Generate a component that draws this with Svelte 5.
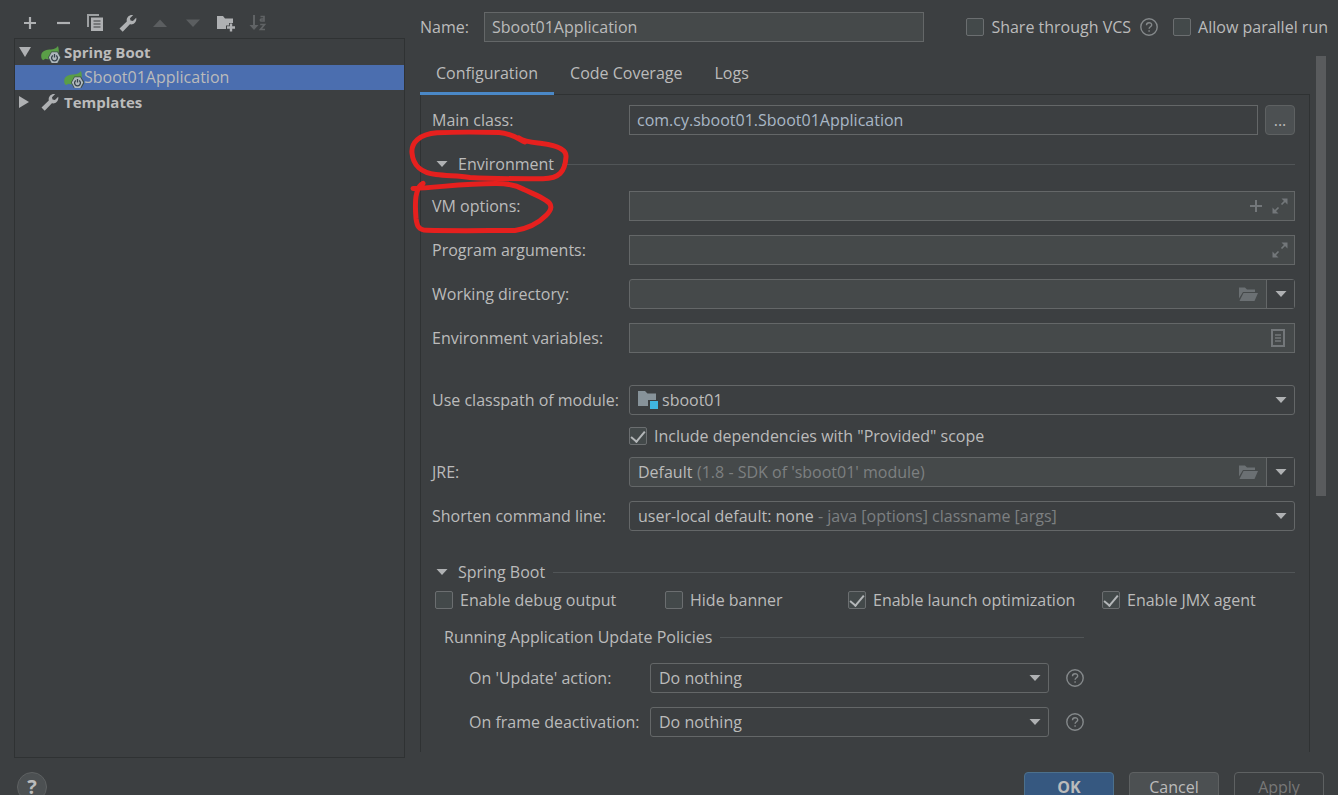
<script lang="ts">
  let name = 'Sboot01Application';
  let mainClass = 'com.cy.sboot01.Sboot01Application';
  let vmOptions = '';
  let programArguments = '';
  let workingDirectory = '';
  let environmentVariables = '';
  let shareThroughVcs = false;
  let allowParallelRun = false;
  let includeProvided = true;
  let activeTab = 'Configuration';

  const tabs = ['Configuration', 'Code Coverage', 'Logs'];

  let springOptions = [
    { id: 'debug-output', label: 'Enable debug output', checked: false },
    { id: 'hide-banner', label: 'Hide banner', checked: false },
    { id: 'launch-optimization', label: 'Enable launch optimization', checked: true },
    { id: 'jmx-agent', label: 'Enable JMX agent', checked: true },
  ];

  const policies = [
    { id: 'update-action', label: "On 'Update' action:" },
    { id: 'frame-deactivation', label: 'On frame deactivation:' },
  ];
</script>

{#snippet arrow()}
  <svg class="arrow" width="12" height="8" viewBox="0 0 12 8" aria-hidden="true"><path d="M.5 1h11L6 7z" fill="currentColor" /></svg>
{/snippet}

{#snippet help()}
  <svg width="18" height="18" viewBox="0 0 18 18" fill="none" stroke="#85898b" stroke-width="1.400" aria-hidden="true">
    <circle cx="9" cy="9" r="8.200" />
    <path d="M6.500 7.300c0-3.400 5.200-3.300 5.200-.3 0 1.800-2.600 1.800-2.600 3.700M9.100 12.200v1.600" />
  </svg>
{/snippet}

{#snippet wrench()}
  <svg width="18" height="18" viewBox="0 0 18 18" aria-hidden="true">
    <path d="M.5 14.600 7.800 7.400C7 3.800 10 .2 14.200 1L11 4.200l.5 2.300 2.400.5L17.200 3.800c.9 4-2.400 7.400-6.300 6.500L3.700 17.700z" fill="#afb1b3" />
  </svg>
{/snippet}

{#snippet leaf()}
  <svg width="20" height="22" viewBox="0 -5 20 22" aria-hidden="true">
    <path d="M17 0c1.300 4.400 1.300 9-2.200 11.500-3 2.300-7.500 2-10.500 1.200L2 14.300.6 12.500C-1 7.500 2.200 4.200 6.800 3.700 11.500 3.400 14.500 3.200 17 0z" fill="#5a9e47" />
    <path d="M10.300 5.500h6.500l3.200 5v2L16.800 18h-6.500L7 11.500z" fill="#3c4c4a" />
    <path d="m10.700 6.200h5.600l2.900 5.300-2.900 5.400h-5.600l-2.900-5.400z" fill="#afb8bd" />
    <path d="M11.900 9.500a2.900 2.900 0 1 0 3.200 0M13.500 8v3.500" fill="none" stroke="#36424c" stroke-width="1.300" />
  </svg>
{/snippet}

{#snippet folder()}
  <svg width="20" height="16" viewBox="0 0 20 16" aria-hidden="true">
    <path d="M1 1.500h6l2 2h8V6H5L1 12.500z" fill="#6b7073" />
    <path d="M5.500 7H20l-3.500 8H1.500z" fill="#6b7073" />
  </svg>
{/snippet}

{#snippet expand()}
  <svg width="16" height="16" viewBox="0 0 16 16" fill="none" stroke="#73777a" stroke-width="1.700" aria-hidden="true">
    <path d="M9.500 6.500 14 2M6.500 9.500 2 14" />
    <path d="M9.500.5h6v6zM.5 9.500v6h6z" fill="#73777a" stroke="none" />
  </svg>
{/snippet}

<div class="dialog">
  <div class="main">
    <aside class="sidebar">
      <div class="toolbar">
        <button aria-label="Add">
          <svg width="18" height="18" viewBox="0 0 18 18"><path d="M9 3v12M3 9h12" stroke="#afb1b3" stroke-width="2.200" /></svg>
        </button>
        <button aria-label="Remove">
          <svg width="18" height="18" viewBox="0 0 18 18"><path d="M3 9h13" stroke="#afb1b3" stroke-width="2.200" /></svg>
        </button>
        <button aria-label="Copy">
          <svg width="18" height="18" viewBox="0 0 18 18">
            <path d="M1 0h12v2H3v11H1z" fill="#9da0a2" />
            <path d="M5 3.500h12V17H5z" fill="#afb1b3" />
            <path d="M7.500 7h7M7.500 10h7M7.500 13h7" stroke="#3c3f41" stroke-width="1.200" />
          </svg>
        </button>
        <button aria-label="Edit templates">{@render wrench()}</button>
        <button aria-label="Move up" disabled>
          <svg width="18" height="18" viewBox="0 0 18 18"><path d="M2 13 9 5.500 16 13z" fill="#5b5e60" /></svg>
        </button>
        <button aria-label="Move down" disabled>
          <svg width="18" height="18" viewBox="0 0 18 18"><path d="M2 5.500h14L9 13z" fill="#5b5e60" /></svg>
        </button>
        <button aria-label="New folder">
          <svg width="20" height="18" viewBox="0 0 20 18">
            <path d="M1 2h6l2 2.500h8V9h-4v2.500h-3V15H1z" fill="#afb1b3" />
            <path d="M15 9.500v8M11 13.500h8" stroke="#afb1b3" stroke-width="2.400" />
          </svg>
        </button>
        <button aria-label="Sort alphabetically" disabled>
          <svg width="18" height="18" viewBox="0 0 18 18" fill="none" stroke="#606365" stroke-width="1.700">
            <path d="M5 1v13" stroke-width="2" />
            <path d="M.5 11h9L5 16z" fill="#606365" stroke="none" />
            <path d="M11.500 2.500H15V7h-2.500c-1.500 0-1.500-2 0-2H15M11.200 10.500h4.300l-4 5h4.500" />
          </svg>
        </button>
      </div>

      <ul class="tree">
        <li class="group">
          <svg class="toggle" width="12" height="12" viewBox="0 0 12 12" aria-hidden="true"><path d="M0 1h12L6 11z" fill="#afb1b3" /></svg>
          <span class="tree-icon">{@render leaf()}</span>
          Spring Boot
        </li>
        <li class="child selected">
          <span class="tree-icon">{@render leaf()}</span>
          Sboot01Application
        </li>
        <li class="group">
          <svg class="toggle" width="12" height="12" viewBox="0 0 12 12" aria-hidden="true"><path d="M0 0v12l10-6z" fill="#afb1b3" /></svg>
          <span class="tree-icon">{@render wrench()}</span>
          Templates
        </li>
      </ul>
    </aside>

    <section class="content">
      <div class="name-row">
        <label for="name">Name:</label>
        <input class="field name-field" id="name" type="text" bind:value={name} />
        <div class="check share">
          <input id="share-vcs" type="checkbox" bind:checked={shareThroughVcs} />
          <label for="share-vcs">Share through VCS</label>
          <button class="help" aria-label="About sharing">{@render help()}</button>
        </div>
        <div class="check">
          <input id="parallel-run" type="checkbox" bind:checked={allowParallelRun} />
          <label for="parallel-run">Allow parallel run</label>
        </div>
      </div>

      <div class="scroll-area">
        <div class="settings">
          <div class="tabs" role="tablist">
            {#each tabs as tab}
              <button role="tab" class:active={activeTab === tab} aria-selected={activeTab === tab} on:click={() => (activeTab = tab)}>{tab}</button>
            {/each}
          </div>

          <div class="panel">
            <div class="row">
              <label for="main-class">Main class:</label>
              <input class="field main-class" id="main-class" type="text" bind:value={mainClass} />
              <button class="browse" aria-label="Browse classes">...</button>
            </div>

            <h2 class="separator environment">{@render arrow()}<span>Environment</span></h2>

            <div class="rows">
              <div class="row">
                <label for="vm-options">VM options:</label>
                <div class="field box">
                  <input id="vm-options" type="text" bind:value={vmOptions} />
                  <button aria-label="Insert macro">
                    <svg width="16" height="16" viewBox="0 0 16 16"><path d="M8 2v12M2 8h12" stroke="#73777a" stroke-width="2" /></svg>
                  </button>
                  <button aria-label="Expand VM options">{@render expand()}</button>
                </div>
              </div>
              <div class="row">
                <label for="program-arguments">Program arguments:</label>
                <div class="field box">
                  <input id="program-arguments" type="text" bind:value={programArguments} />
                  <button aria-label="Expand program arguments">{@render expand()}</button>
                </div>
              </div>
              <div class="row">
                <label for="working-directory">Working directory:</label>
                <div class="field box combo">
                  <input id="working-directory" type="text" bind:value={workingDirectory} />
                  <button aria-label="Browse directories">{@render folder()}</button>
                  <button class="drop" aria-label="Show directories">{@render arrow()}</button>
                </div>
              </div>
              <div class="row">
                <label for="environment-variables">Environment variables:</label>
                <div class="field box">
                  <input id="environment-variables" type="text" bind:value={environmentVariables} />
                  <button aria-label="Edit environment variables">
                    <svg width="20" height="18" viewBox="0 0 20 18" fill="none" stroke="#73777a">
                      <path d="M4 1h12v16H4z" stroke-width="2" />
                      <path d="M7 6h6M7 9h6M7 12h6" stroke-width="1.300" />
                    </svg>
                  </button>
                </div>
              </div>
            </div>

            <div class="rows classpath">
              <div>
                <div class="row">
                  <label for="module">Use classpath of module:</label>
                  <div class="field box combo plain">
                    <svg width="20" height="18" viewBox="0 0 20 18" aria-hidden="true">
                      <path d="M0 0h7l2.500 2.500H18V9h-8v6H0z" fill="#87939a" />
                      <path d="M12 10h8v8h-8z" fill="#40b6e0" />
                    </svg>
                    <select id="module"><option>sboot01</option></select>
                    {@render arrow()}
                  </div>
                </div>
                <div class="check provided">
                  <input id="provided" type="checkbox" bind:checked={includeProvided} />
                  <label for="provided">Include dependencies with "Provided" scope</label>
                </div>
                <div class="row">
                  <label for="jre">JRE:</label>
                  <div class="field box combo">
                    <select id="jre"><option>Default</option></select>
                    <span class="hint">(1.8 - SDK of 'sboot01' module)</span>
                    <button aria-label="Browse JRE">{@render folder()}</button>
                    <button class="drop" aria-label="Show JREs">{@render arrow()}</button>
                  </div>
                </div>
              </div>
              <div class="row">
                <label for="shorten">Shorten command line:</label>
                <div class="field box combo plain">
                  <select id="shorten"><option>user-local default: none</option></select>
                  <span class="hint">- java [options] classname [args]</span>
                  {@render arrow()}
                </div>
              </div>
            </div>

            <h2 class="separator spring">{@render arrow()}<span>Spring Boot</span></h2>

            <div class="spring-options">
              {#each springOptions as option}
                <div class="check">
                  <input id={option.id} type="checkbox" bind:checked={option.checked} />
                  <label for={option.id}>{option.label}</label>
                </div>
              {/each}
            </div>

            <div class="policies">
              <h3 class="separator"><span>Running Application Update Policies</span></h3>
              <div class="rows">
                {#each policies as policy}
                  <div class="row policy">
                    <label for={policy.id}>{policy.label}</label>
                    <div class="field box combo plain">
                      <select id={policy.id}><option>Do nothing</option></select>
                      {@render arrow()}
                    </div>
                    <button class="help" aria-label="About this policy">{@render help()}</button>
                  </div>
                {/each}
              </div>
            </div>
          </div>
        </div>
        <div class="scrollbar"></div>
      </div>

      <svg class="marks" width="170" height="110" viewBox="405 128 170 110" aria-hidden="true">
        <path d="M525 142C517 138 510 133 499 132.500C478 132 455 132 437 132.700C419 134 411 143 412 153C413 165 421 173 436 174.500C448 176 458 175.500 470 177.500C495 179 520 178.700 543 178.700C559 178.500 565 172 566 157C567 148 553 145 542 143.500C535 142.500 525 142 519 138" />
        <path d="M413 188.500c25-1 50-5 83-5 14 0 21 2 28 6 8 4 15 6 22 11 7 4 6 9 0 15-8 8-18 13-31 15-29 0-60 .5-88-.2-9 0-10-5-11-12-1-12-.5-24 2-29 1-3 2-4 5-6" />
      </svg>
    </section>
  </div>

  <footer class="footer">
    <button class="round" aria-label="Help">?</button>
    <button class="action ok">OK</button>
    <button class="action">Cancel</button>
    <button class="action" disabled>Apply</button>
  </footer>
</div>

<style>
  :global(body) {
    margin: 0;
    background: #3c3f41;
  }

  .dialog {
    height: 100vh;
    overflow: hidden;
    display: flex;
    flex-direction: column;
    background: #3c3f41;
    color: #bbbbbb;
    font-family: "Open Sans", "Noto Sans", sans-serif;
    font-size: 16px;
    line-height: 20px;
  }

  .dialog * {
    box-sizing: border-box;
  }

  button,
  input,
  select {
    margin: 0;
    padding: 0;
    border: 0;
    background: none;
    color: inherit;
    font: inherit;
  }

  svg {
    display: block;
    flex: none;
  }

  .main {
    flex: none;
    display: flex;
    gap: 15px;
    padding-left: 14px;
  }

  .sidebar {
    flex: 0 0 391px;
    display: flex;
    flex-direction: column;
  }

  .toolbar {
    display: flex;
    justify-content: space-between;
    width: 253px;
    height: 38px;
    padding: 14px 0 0 7px;
  }

  .toolbar button {
    width: 18px;
    height: 18px;
  }

  .tree {
    flex: 1;
    margin: 0;
    padding: 1px 0;
    border: 1px solid #2f3233;
    list-style: none;
  }

  .tree li {
    display: flex;
    align-items: center;
    height: 25px;
    padding: 0 0 2px 4px;
  }

  .tree .group {
    font-weight: bold;
    font-size: 15px;
  }

  .tree .child {
    padding-left: 49px;
  }

  .tree .selected {
    background: #4b6eaf;
  }

  .toggle {
    margin-right: 10px;
  }

  .tree-icon {
    width: 20px;
    margin-right: 3px;
  }

  .child .tree-icon {
    margin-right: 0;
  }

  .content {
    position: relative;
    flex: 1;
    min-width: 0;
    padding-bottom: 6px;
  }

  .name-row {
    display: flex;
    align-items: center;
    height: 56px;
    padding: 12px 10px 14px 0;
  }

  .name-row > label {
    flex: 0 0 64px;
  }

  .field {
    flex: 1;
    min-width: 0;
    height: 30px;
    padding: 0 7px;
    border: 1px solid #646768;
    background: #45494a;
  }

  .name-field {
    flex: 0 1 440px;
  }

  .share {
    margin-left: auto;
    margin-right: 15px;
  }

  .check {
    display: flex;
    align-items: center;
    gap: 7px;
    white-space: nowrap;
  }

  .check input {
    appearance: none;
    flex: none;
    display: grid;
    place-items: center;
    width: 18px;
    height: 18px;
    border: 1px solid #6b6e70;
    border-radius: 2px;
    background: #43494a;
  }

  .check input:checked::before {
    content: "";
    width: 6px;
    height: 12px;
    margin-bottom: 3px;
    border: solid #b4b7b9;
    border-width: 0 2px 2px 0;
    transform: rotate(40deg);
  }

  .help {
    width: 18px;
    height: 18px;
    margin-left: 2px;
  }

  .scroll-area {
    display: flex;
    align-items: flex-start;
    gap: 6px;
    padding-right: 12px;
  }

  .settings {
    flex: 1;
    min-width: 0;
  }

  .scrollbar {
    width: 10px;
    height: 440px;
    background: #595b5d;
  }

  .tabs {
    display: flex;
    height: 39px;
    border-bottom: 1px solid #2f3233;
  }

  .tabs button {
    height: 39px;
    padding: 0 16px 2px;
    border-bottom: 3px solid transparent;
  }

  .tabs .active {
    border-color: #4a88c7;
  }

  .panel {
    padding: 10px 14px 15px 11px;
    border: solid #2f3233;
    border-width: 0 1px;
  }

  .rows {
    display: flex;
    flex-direction: column;
    gap: 14px;
  }

  .row {
    display: flex;
    align-items: center;
  }

  .row > label {
    flex: 0 0 197px;
  }

  .main-class {
    background: transparent;
    color: #a9b7c6;
  }

  .browse {
    width: 30px;
    height: 30px;
    margin-left: 7px;
    border: 1px solid #5e6162;
    border-radius: 4px;
    background: #4c5052;
  }

  .separator {
    display: flex;
    align-items: center;
    height: 24px;
    margin: 0;
    font-size: 16px;
    font-weight: normal;
  }

  .separator .arrow {
    margin: 0 10px 0 4px;
  }

  .separator::after {
    content: "";
    flex: 1;
    height: 1px;
    margin-left: 8px;
    background: #515557;
  }

  .environment {
    margin: 17px 0 15px;
  }

  .box {
    display: flex;
    align-items: center;
    gap: 8px;
    padding: 0 6px 0 8px;
  }

  .box > input {
    flex: 1;
    min-width: 0;
    height: 28px;
    outline: none;
  }

  .box > select {
    appearance: none;
    outline: none;
  }

  .combo {
    gap: 4px;
    padding-right: 0;
    border-radius: 3px;
  }

  .combo > button:not(.drop) {
    margin-left: auto;
    margin-right: 4px;
  }

  .plain {
    padding-right: 7px;
    background: transparent;
  }

  .plain > .arrow {
    margin-left: auto;
  }

  .arrow {
    color: #afb1b3;
  }

  .drop {
    display: grid;
    place-items: center;
    width: 28px;
    height: 28px;
    border-left: 1px solid #646768;
    background: #3c3f41;
  }

  .hint {
    color: #7d8081;
  }

  .classpath {
    padding-top: 32px;
  }

  .provided {
    padding: 12px 0 12px 197px;
    line-height: 18px;
  }

  .spring {
    margin-top: 29px;
  }

  .spring-options {
    display: grid;
    grid-template-columns: 230fr 183fr 254fr 193fr;
    padding: 6px 0 15px 3px;
  }

  .policies {
    max-width: 652px;
    padding-left: 12px;
  }

  .policies .separator {
    margin-bottom: 14px;
  }

  .policy {
    padding-left: 25px;
  }

  .policy > label {
    flex-basis: 181px;
  }

  .policy .help {
    margin-left: 17px;
  }

  /* hand-drawn rings round the two labels */
  .marks {
    position: absolute;
    top: 128px;
    left: -15px;
    pointer-events: none;
    fill: none;
    stroke: #e6201e;
    stroke-width: 5;
    stroke-linecap: round;
    stroke-linejoin: round;
  }

  .footer {
    flex: none;
    display: flex;
    gap: 15px;
    padding: 14px 14px 14px 17px;
  }

  .round {
    width: 30px;
    height: 30px;
    margin-right: auto;
    border: 1px solid #5e6162;
    border-radius: 50%;
    background: #4c5052;
    font-size: 20px;
    font-weight: bold;
  }

  .action {
    width: 90px;
    height: 30px;
    border: 1px solid #5e6162;
    border-radius: 4px;
    background: #4c5052;
  }

  .ok {
    border-color: #4c708c;
    background: #365880;
    font-weight: bold;
  }

  .action:disabled {
    background: transparent;
    color: #777777;
  }
</style>
